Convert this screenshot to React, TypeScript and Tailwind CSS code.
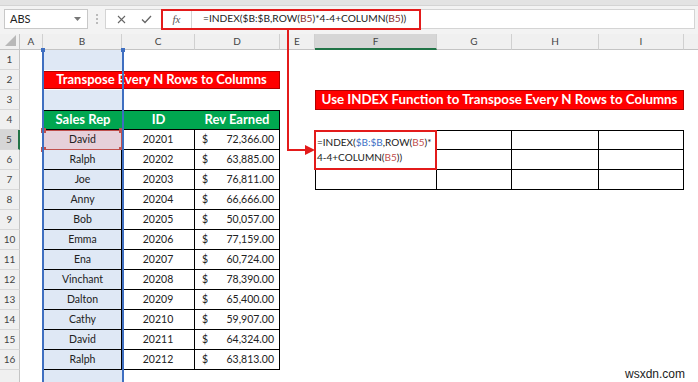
import React from "react";

const LETTERS = ["A", "B", "C", "D", "E", "F", "G", "H", "I"];

const rows: [string, string, string][] = [
  ["David", "20201", "72,366.00"],
  ["Ralph", "20202", "63,885.00"],
  ["Joe", "20203", "76,811.00"],
  ["Anny", "20204", "66,666.00"],
  ["Bob", "20205", "50,057.00"],
  ["Emma", "20206", "77,159.00"],
  ["Ena", "20207", "60,724.00"],
  ["Vinchant", "20208", "78,390.00"],
  ["Dalton", "20209", "65,400.00"],
  ["Cathy", "20210", "59,907.00"],
  ["David", "20211", "64,324.00"],
  ["Ralph", "20212", "63,813.00"],
];

const Empty = ({ blue }: { blue?: boolean }) => (
  <div className={blue ? "bg-[#dfe8f5]" : "bg-white"} />
);

// one sheet row: header number + cells A..I + filler
const SheetRow = ({ r }: { r: number }) => {
  const active = r === 5;
  const cells: React.ReactNode[] = [];

  cells.push(
    <div
      key="h"
      className={`flex items-center justify-center text-[10px] text-[#444] border-b border-[#d8d8d8] ${
        active ? "bg-[#d6d6d6] border-r-2 border-r-[#217346]" : "bg-[#f0f0f0] border-r border-r-[#c4c4c4]"
      }`}
    >
      {r < 17 ? r : ""}
    </div>
  );
  cells.push(<Empty key="a" />);

  // columns B..D
  if (r === 2) {
    cells.push(
      <div
        key="t"
        className="col-span-3 my-px bg-[#ff0000] border border-[#b00000] flex items-center justify-center text-white font-bold text-[13px]"
      >
        Transpose Every N Rows to Columns
      </div>
    );
  } else if (r === 4) {
    ["Sales Rep", "ID", "Rev Earned"].map((t, i) =>
      cells.push(
        <div
          key={t}
          className={`bg-[#00a650] border-y border-black flex items-center justify-center text-white font-bold text-[13px] ${
            i === 0 ? "border-l" : ""
          } ${i === 2 ? "border-r" : ""}`}
        >
          {t}
        </div>
      )
    );
  } else if (r >= 5 && r <= 16) {
    const [name, id, rev] = rows[r - 5];
    cells.push(
      <div
        key="b"
        className={`relative flex items-center justify-center text-[10.5px] text-[#222] border-b ${
          r === 5 ? "bg-[#e6d0d9] border border-[#c0504d]" : "bg-[#dfe8f5] border-black border-l border-r"
        }`}
      >
        {name}
        {r === 5 && (
          <>
            <span className="absolute -left-[3px] -top-[3px] w-[5px] h-[5px] bg-[#c0504d]" />
            <span className="absolute -right-[3px] -top-[3px] w-[5px] h-[5px] bg-[#c0504d]" />
            <span className="absolute -left-[3px] -bottom-[3px] w-[5px] h-[5px] bg-[#c0504d]" />
            <span className="absolute -right-[3px] -bottom-[3px] w-[5px] h-[5px] bg-[#c0504d]" />
          </>
        )}
      </div>
    );
    cells.push(
      <div key="c" className="flex items-center justify-center text-[10.5px] text-[#222] border-b border-r border-black bg-white">
        {id}
      </div>
    );
    cells.push(
      <div key="d" className="flex items-center justify-between pl-[7px] pr-[5px] text-[10.5px] text-[#222] border-b border-r border-black bg-white">
        <span>$</span>
        <span>{rev}</span>
      </div>
    );
  } else {
    cells.push(<Empty key="b" blue />, <Empty key="c" />, <Empty key="d" />);
  }

  cells.push(<Empty key="e" />);

  // columns F..I
  if (r === 3) {
    cells.push(
      <div
        key="t2"
        className="col-span-4 bg-[#ff0000] border border-[#b00000] flex items-center justify-center text-white font-bold text-[13.3px]"
      >
        Use INDEX Function to Transpose Every N Rows to Columns
      </div>
    );
  } else if (r >= 5 && r <= 7) {
    if (r === 5) {
      cells.push(
        <div
          key="f"
          className="row-span-2 relative z-10 bg-white border-2 border-[#e31b1b] -ml-px flex flex-col justify-center text-[10px] leading-[15px] text-[#222] pl-px"
        >
          <span>
            =INDEX(<span className="text-[#3c6fc4]">$B:$B</span>,ROW(<span className="text-[#c0504d]">B5</span>)*
          </span>
          <span>
            4-4+COLUMN(<span className="text-[#c0504d]">B5</span>))
          </span>
        </div>
      );
    }
    if (r === 7) {
      cells.push(<div key="f" className="border-l border-r border-b border-black bg-white" />);
    }
    ["g", "h", "i"].forEach((k) =>
      cells.push(
        <div key={k} className={`border-r border-b border-black bg-white ${r === 5 ? "border-t" : ""}`} />
      )
    );
  } else {
    cells.push(<Empty key="f" />, <Empty key="g" />, <Empty key="h" />, <Empty key="i" />);
  }

  cells.push(<Empty key="z" />);
  return <>{cells}</>;
};

export default function App() {
  return (
    <div className="relative w-[698px] h-[382px] overflow-hidden bg-white font-['Lato',sans-serif]">
      {/* ribbon edge */}
      <div className="h-[6px] bg-[#e3e3e3] border-b border-[#d4d4d4]" />

      {/* formula bar */}
      <div className="h-[26px] bg-[#f3f3f3] flex items-center pl-[4px] pr-[3px] gap-0">
        <div className="w-[84px] h-[20px] bg-white border border-[#c8c8c8] flex items-center justify-between pl-[5px] pr-[6px] text-[11px] text-[#222]">
          <span>ABS</span>
          <svg width="7" height="4" viewBox="0 0 7 4">
            <path d="M0 0 L7 0 L3.5 4 Z" fill="#777" />
          </svg>
        </div>
        <div className="w-[17px] flex flex-col items-center gap-[2px]">
          <span className="w-[2px] h-[2px] bg-[#bbb]" />
          <span className="w-[2px] h-[2px] bg-[#bbb]" />
          <span className="w-[2px] h-[2px] bg-[#bbb]" />
        </div>
        <div className="w-[56px] h-[20px] bg-white border-y border-l border-[#d4d4d4] flex items-center gap-[15px] pl-[11px]">
          <svg width="9" height="9" viewBox="0 0 9 9">
            <path d="M1 1 L8 8 M8 1 L1 8" stroke="#666" strokeWidth="1.1" />
          </svg>
          <svg width="11" height="9" viewBox="0 0 11 9">
            <path d="M1 4.5 L4 7.5 L10 1" stroke="#666" strokeWidth="1.3" fill="none" />
          </svg>
        </div>
        <div className="relative flex-1 h-[20px] bg-white border border-[#d4d4d4] flex items-center">
          <div className="w-[30px] h-full flex items-center justify-center border-r border-[#d4d4d4] text-[11px] italic text-[#555] font-['Liberation_Serif',serif]">
            fx
          </div>
          <div className="pl-[11px] text-[10.2px] text-[#222] whitespace-nowrap">
            =INDEX($B:$B,ROW(<span className="text-[#8a2e2e]">B5</span>)*4-4+COLUMN(<span className="text-[#8a2e2e]">B5</span>))
          </div>
          <div className="absolute -left-px -top-px w-[260px] h-[21px] border-2 border-[#e31b1b]" />
        </div>
      </div>

      <div className="h-[2px] bg-[#f3f3f3]" />

      {/* sheet */}
      <div className="grid grid-cols-[20px_23px_79px_73px_85px_35px_122px_75px_87px_85px_1fr] grid-rows-[16px_repeat(17,20px)]">
        <div className="relative bg-[#f0f0f0] border-r border-b border-[#c4c4c4]">
          <svg className="absolute right-[3px] bottom-[3px]" width="11" height="11" viewBox="0 0 11 11">
            <path d="M11 0 L11 11 L0 11 Z" fill="#b8b8b8" />
          </svg>
        </div>
        {LETTERS.map((l) => (
          <div
            key={l}
            className={`flex items-center justify-center text-[10px] text-[#444] border-r border-[#d0d0d0] ${
              l === "F" ? "bg-[#d6d6d6] border-b-2 border-b-[#217346]" : "bg-[#f0f0f0] border-b border-b-[#c4c4c4]"
            }`}
          >
            {l}
          </div>
        ))}
        <div className="bg-[#f0f0f0] border-b border-[#c4c4c4]" />
        {Array.from({ length: 17 }, (_, i) => (
          <SheetRow key={i} r={i + 1} />
        ))}
      </div>

      {/* column B selection outline */}
      <div className="absolute left-[42px] top-[50px] w-[82px] h-[340px] border-x-2 border-[#3f6fc1] pointer-events-none">
        <span className="absolute -left-[3px] -top-[2px] w-[4px] h-[4px] bg-[#3f6fc1]" />
        <span className="absolute -right-[3px] -top-[2px] w-[4px] h-[4px] bg-[#3f6fc1]" />
      </div>

      {/* callout arrow */}
      <svg className="absolute left-0 top-0 pointer-events-none" width="698" height="382">
        <path d="M288 28 L288 150 L306 150" stroke="#e31b1b" strokeWidth="2" fill="none" />
        <path d="M305 145 L315 150 L305 155 Z" fill="#e31b1b" />
      </svg>

      <div className="absolute left-[625px] top-[365px] text-[12px] text-[#222] font-['Liberation_Sans',sans-serif]">
        wsxdn.com
      </div>
    </div>
  );
}
